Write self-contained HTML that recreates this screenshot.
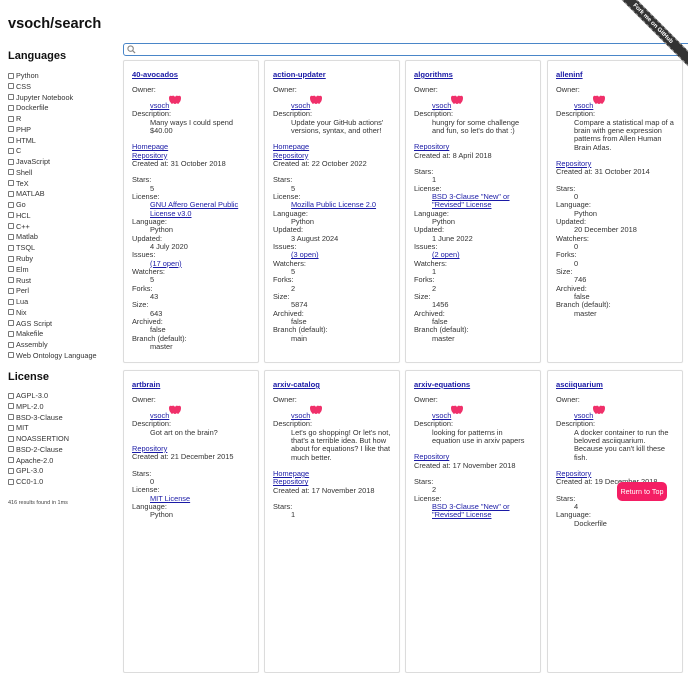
<!DOCTYPE html>
<html><head><meta charset="utf-8"><style>
*{box-sizing:border-box;margin:0;padding:0}
html,body{width:688px;height:512px;overflow:hidden;background:#fff;font-family:"Liberation Sans",Arial,sans-serif;color:#222}
h1{position:absolute;left:8px;top:16px;font-size:14.6px;font-weight:bold;color:#111}
h2{position:absolute;left:8px;font-size:11px;font-weight:bold;color:#111}
.list{position:absolute;left:8px;font-size:7.3px;color:#333}
.list div{height:10.77px;line-height:10.77px;white-space:nowrap}
.cb{display:inline-block;width:6px;height:6px;border:1px solid #777;border-radius:1px;margin-right:2px;vertical-align:-0.5px}
.search{position:absolute;left:123px;top:43px;width:575px;height:13px;border:1.3px solid #4a86c8;border-radius:3px}
.search svg{position:absolute;left:3px;top:1px}
.card{position:absolute;width:136px;height:303px;border:1px solid #dcdcdc;border-radius:2px;padding:10px 8px 0 8px;font-size:7.4px;line-height:8.35px;color:#333;overflow:hidden;box-shadow:0 0 1px #eee}
.card a{color:#1a1aa6;text-decoration:underline}
.t{font-weight:bold;font-size:7.6px;margin-bottom:6.5px;display:block}
.v{padding-left:18px}
.own{padding-left:18px;height:16px;padding-top:7.6px;position:relative}
.own svg{position:absolute;left:36px;top:1px}
.gap{height:8px}
.rib{position:absolute;right:-30px;top:18px;width:130px;height:11px;background:#333;color:#fff;font-size:6px;font-weight:bold;text-align:center;line-height:11px;transform:rotate(45deg);border-top:1px dashed #999;border-bottom:1px dashed #999}
.btn{position:absolute;left:617px;top:482px;width:50px;height:19px;background:#f41e64;color:#fff;border-radius:5px;font-size:7.2px;text-align:center;line-height:19px}
.res{position:absolute;left:8px;top:500px;font-size:5.5px;color:#444}
</style></head><body>
<h1>vsoch/search</h1>
<h2 style="top:50px">Languages</h2>
<div class="list" style="top:71px">
<div><span class="cb"></span>Python</div><div><span class="cb"></span>CSS</div><div><span class="cb"></span>Jupyter Notebook</div><div><span class="cb"></span>Dockerfile</div><div><span class="cb"></span>R</div><div><span class="cb"></span>PHP</div><div><span class="cb"></span>HTML</div><div><span class="cb"></span>C</div><div><span class="cb"></span>JavaScript</div><div><span class="cb"></span>Shell</div><div><span class="cb"></span>TeX</div><div><span class="cb"></span>MATLAB</div><div><span class="cb"></span>Go</div><div><span class="cb"></span>HCL</div><div><span class="cb"></span>C++</div><div><span class="cb"></span>Matlab</div><div><span class="cb"></span>TSQL</div><div><span class="cb"></span>Ruby</div><div><span class="cb"></span>Elm</div><div><span class="cb"></span>Rust</div><div><span class="cb"></span>Perl</div><div><span class="cb"></span>Lua</div><div><span class="cb"></span>Nix</div><div><span class="cb"></span>AGS Script</div><div><span class="cb"></span>Makefile</div><div><span class="cb"></span>Assembly</div><div><span class="cb"></span>Web Ontology Language</div>
</div>
<h2 style="top:371px">License</h2>
<div class="list" style="top:391px">
<div><span class="cb"></span>AGPL-3.0</div><div><span class="cb"></span>MPL-2.0</div><div><span class="cb"></span>BSD-3-Clause</div><div><span class="cb"></span>MIT</div><div><span class="cb"></span>NOASSERTION</div><div><span class="cb"></span>BSD-2-Clause</div><div><span class="cb"></span>Apache-2.0</div><div><span class="cb"></span>GPL-3.0</div><div><span class="cb"></span>CC0-1.0</div>
</div>
<div class="res">416 results found in 1ms</div>
<div class="search"><svg width="9" height="9" viewBox="0 0 10 10"><circle cx="4" cy="4" r="3" fill="none" stroke="#888" stroke-width="1.2"/><path d="M6.3 6.3L9 9" stroke="#888" stroke-width="1.3"/></svg></div>
<svg width="0" height="0" style="position:absolute"><defs><g id="av"><path d="M1 3Q1 0 4 1Q6 0 7 2Q8 0 10 1Q13 0 13 3Q13 6 11 8Q10 10 9 8Q7 10 5 8Q4 10 3 8Q1 6 1 3Z" fill="#f0306a"/></g></defs></svg>

<div class="card" style="left:123px;top:60px">
<a class="t">40-avocados</a>
<div>Owner:</div><div class="own"><a>vsoch</a><svg width="14" height="11"><use href="#av"/></svg></div>
<div>Description:</div><div class="v">Many ways I could spend $40.00</div><div class="gap"></div>
<a>Homepage</a><br><a>Repository</a><div>Created at: 31 October 2018</div><div class="gap"></div>
<div>Stars:</div><div class="v">5</div><div>License:</div><div class="v"><a>GNU Affero General Public License v3.0</a></div>
<div>Language:</div><div class="v">Python</div><div>Updated:</div><div class="v">4 July 2020</div>
<div>Issues:</div><div class="v"><a>(17 open)</a></div><div>Watchers:</div><div class="v">5</div>
<div>Forks:</div><div class="v">43</div><div>Size:</div><div class="v">643</div>
<div>Archived:</div><div class="v">false</div><div>Branch (default):</div><div class="v">master</div>
</div>

<div class="card" style="left:264px;top:60px">
<a class="t">action-updater</a>
<div>Owner:</div><div class="own"><a>vsoch</a><svg width="14" height="11"><use href="#av"/></svg></div>
<div>Description:</div><div class="v">Update your GitHub actions' versions, syntax, and other!</div><div class="gap"></div>
<a>Homepage</a><br><a>Repository</a><div>Created at: 22 October 2022</div><div class="gap"></div>
<div>Stars:</div><div class="v">5</div><div>License:</div><div class="v"><a>Mozilla Public License 2.0</a></div>
<div>Language:</div><div class="v">Python</div><div>Updated:</div><div class="v">3 August 2024</div>
<div>Issues:</div><div class="v"><a>(3 open)</a></div><div>Watchers:</div><div class="v">5</div>
<div>Forks:</div><div class="v">2</div><div>Size:</div><div class="v">5874</div>
<div>Archived:</div><div class="v">false</div><div>Branch (default):</div><div class="v">main</div>
</div>

<div class="card" style="left:405px;top:60px">
<a class="t">algorithms</a>
<div>Owner:</div><div class="own"><a>vsoch</a><svg width="14" height="11"><use href="#av"/></svg></div>
<div>Description:</div><div class="v">hungry for some challenge and fun, so let's do that :)</div><div class="gap"></div>
<a>Repository</a><div>Created at: 8 April 2018</div><div class="gap"></div>
<div>Stars:</div><div class="v">1</div><div>License:</div><div class="v"><a>BSD 3-Clause "New" or "Revised" License</a></div>
<div>Language:</div><div class="v">Python</div><div>Updated:</div><div class="v">1 June 2022</div>
<div>Issues:</div><div class="v"><a>(2 open)</a></div><div>Watchers:</div><div class="v">1</div>
<div>Forks:</div><div class="v">2</div><div>Size:</div><div class="v">1456</div>
<div>Archived:</div><div class="v">false</div><div>Branch (default):</div><div class="v">master</div>
</div>

<div class="card" style="left:547px;top:60px">
<a class="t">alleninf</a>
<div>Owner:</div><div class="own"><a>vsoch</a><svg width="14" height="11"><use href="#av"/></svg></div>
<div>Description:</div><div class="v">Compare a statistical map of a brain with gene expression patterns from Allen Human Brain Atlas.</div><div class="gap"></div>
<a>Repository</a><div>Created at: 31 October 2014</div><div class="gap"></div>
<div>Stars:</div><div class="v">0</div>
<div>Language:</div><div class="v">Python</div><div>Updated:</div><div class="v">20 December 2018</div>
<div>Watchers:</div><div class="v">0</div>
<div>Forks:</div><div class="v">0</div><div>Size:</div><div class="v">746</div>
<div>Archived:</div><div class="v">false</div><div>Branch (default):</div><div class="v">master</div>
</div>

<div class="card" style="left:123px;top:370px">
<a class="t">artbrain</a>
<div>Owner:</div><div class="own"><a>vsoch</a><svg width="14" height="11"><use href="#av"/></svg></div>
<div>Description:</div><div class="v">Got art on the brain?</div><div class="gap"></div>
<a>Repository</a><div>Created at: 21 December 2015</div><div class="gap"></div>
<div>Stars:</div><div class="v">0</div><div>License:</div><div class="v"><a>MIT License</a></div>
<div>Language:</div><div class="v">Python</div>
</div>

<div class="card" style="left:264px;top:370px">
<a class="t">arxiv-catalog</a>
<div>Owner:</div><div class="own"><a>vsoch</a><svg width="14" height="11"><use href="#av"/></svg></div>
<div>Description:</div><div class="v">Let's go shopping! Or let's not, that's a terrible idea. But how about for equations? I like that much better.</div><div class="gap"></div>
<a>Homepage</a><br><a>Repository</a><div>Created at: 17 November 2018</div><div class="gap"></div>
<div>Stars:</div><div class="v">1</div>
</div>

<div class="card" style="left:405px;top:370px">
<a class="t">arxiv-equations</a>
<div>Owner:</div><div class="own"><a>vsoch</a><svg width="14" height="11"><use href="#av"/></svg></div>
<div>Description:</div><div class="v">looking for patterns in equation use in arxiv papers</div><div class="gap"></div>
<a>Repository</a><div>Created at: 17 November 2018</div><div class="gap"></div>
<div>Stars:</div><div class="v">2</div><div>License:</div><div class="v"><a>BSD 3-Clause "New" or "Revised" License</a></div>
</div>

<div class="card" style="left:547px;top:370px">
<a class="t">asciiquarium</a>
<div>Owner:</div><div class="own"><a>vsoch</a><svg width="14" height="11"><use href="#av"/></svg></div>
<div>Description:</div><div class="v">A docker container to run the beloved asciiquarium. Because you can't kill these fish.</div><div class="gap"></div>
<a>Repository</a><div>Created at: 19 December 2018</div><div class="gap"></div>
<div>Stars:</div><div class="v">4</div><div>Language:</div><div class="v">Dockerfile</div>
</div>

<div class="rib">Fork me on GitHub</div>
<div class="btn">Return to Top</div>
</body></html>
